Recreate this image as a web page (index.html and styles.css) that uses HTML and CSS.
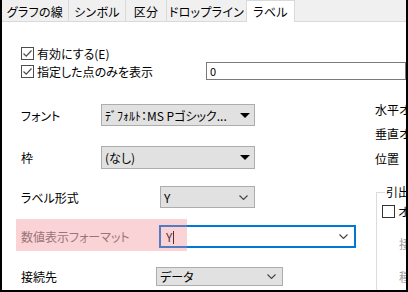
FILE: index.html
```html
<!DOCTYPE html>
<html lang="ja">
<head>
    <meta charset="UTF-8">
    <title>ラベル</title>
    <link rel="stylesheet" href="styles.css">
</head>
<body>

<div class="window">
    <!-- Tab strip -->
    <div class="tabs">
        <div class="tab tab-line">グラフの線</div>
        <div class="tab tab-symbol">シンボル</div>
        <div class="tab tab-split">区分</div>
        <div class="tab tab-drop">ドロップライン</div>
        <div class="tab tab-label active">ラベル</div>
    </div>

    <div class="page">
        <!-- Check options -->
        <div class="checks">
            <div class="check-row">
                <label class="check">
                    <svg class="checkbox" width="13" height="13" viewBox="0 0 13 13"><rect x="0.5" y="0.5" width="12" height="12" fill="#fff" stroke="#4d4d4d"/><polyline points="2.5,6.5 5.2,9.2 10.5,3.5" fill="none" stroke="#4d4d4d" stroke-width="1.2"/></svg>
                    有効にする(E)
                </label>
            </div>
            <div class="check-row">
                <label class="check check-wide">
                    <svg class="checkbox" width="13" height="13" viewBox="0 0 13 13"><rect x="0.5" y="0.5" width="12" height="12" fill="#fff" stroke="#4d4d4d"/><polyline points="2.5,6.5 5.2,9.2 10.5,3.5" fill="none" stroke="#4d4d4d" stroke-width="1.2"/></svg>
                    指定した点のみを表示
                </label>
                <div class="text-input">0</div>
            </div>
        </div>

        <div class="form">
            <!-- Left column -->
            <div class="left">
                <div class="row row-font">
                    <span class="label w-80">フォント</span>
                    <div class="combo old w-154">
                        <span>ﾃﾞﾌｫﾙﾄ：MS Pゴシック...</span>
                        <span class="tri"></span>
                    </div>
                </div>
                <div class="row row-frame">
                    <span class="label w-80">枠</span>
                    <div class="combo old w-154">
                        <span>(なし)</span>
                        <span class="tri"></span>
                    </div>
                </div>
                <div class="row row-type">
                    <span class="label w-139">ラベル形式</span>
                    <div class="combo w-95">
                        <span>Y</span>
                        <svg class="chev" width="9" height="5" viewBox="0 0 9 5"><polyline points="0.5,0.5 4.5,4.5 8.5,0.5" fill="none" stroke="#444" stroke-width="1.1"/></svg>
                    </div>
                </div>
                <div class="row row-format">
                    <span class="label muted w-138">数値表示フォーマット</span>
                    <div class="combo focus w-197">
                        <span>Y<span class="caret"></span></span>
                        <svg class="chev" width="9" height="5" viewBox="0 0 9 5"><polyline points="0.5,0.5 4.5,4.5 8.5,0.5" fill="none" stroke="#444" stroke-width="1.1"/></svg>
                    </div>
                    <div class="highlight"></div>
                </div>
                <div class="row row-target">
                    <span class="label w-135">接続先</span>
                    <div class="combo w-127">
                        <span>データ</span>
                        <svg class="chev" width="9" height="5" viewBox="0 0 9 5"><polyline points="0.5,0.5 4.5,4.5 8.5,0.5" fill="none" stroke="#444" stroke-width="1.1"/></svg>
                    </div>
                </div>
            </div>

            <!-- Right column (cut off by the window edge) -->
            <div class="right">
                <div class="r-label r-horiz">水平オフセット</div>
                <div class="r-label r-vert">垂直オフセット</div>
                <div class="r-label r-pos">位置</div>
                <fieldset class="group">
                    <legend>引出線</legend>
                    <label class="check">
                        <svg class="checkbox" width="13" height="13" viewBox="0 0 13 13"><rect x="0.5" y="0.5" width="12" height="12" fill="#fff" stroke="#333"/></svg>
                        オン
                    </label>
                    <div class="r-label gray r-conn">接続</div>
                    <div class="r-label gray r-kind">種類</div>
                </fieldset>
            </div>
        </div>
    </div>
</div>

</body>
</html>
```

FILE: styles.css
```css
body {
    margin: 0;
    font-family: "Noto Sans CJK JP", "Noto Sans", sans-serif;
    font-size: 12px;
    font-feature-settings: "palt";
    color: #000;
    background: #fff;
}
.window {
    width: 408px;
    height: 292px;
    box-sizing: border-box;
    border-left: 2px solid #000;
    border-right: 2px solid #000;
    border-bottom: 2px solid #000;
    overflow: hidden;
    background: #fff;
}
.tabs {
    display: flex;
    height: 21px;
    background: #f0f0f0;
    border-bottom: 1px solid #d9d9d9;
    white-space: nowrap;
}
.tab {
    height: 21px;
    line-height: 23px;
    text-align: center;
    letter-spacing: 0.3px;
    box-sizing: border-box;
    border-right: 1px solid #d9d9d9;
}
.tab-line { width: 67px; }
.tab-symbol { width: 57px; }
.tab-split { width: 41px; }
.tab-drop { width: 80px; }
.tab-label { width: 49px; }
.tab.active {
    background: #fff;
    height: 22px;
    line-height: 22px;
    border-top: 1px solid #d9d9d9;
    border-left: 1px solid #d9d9d9;
    border-right: 1px solid #d9d9d9;
    margin-left: -1px;
}
.page {
    padding-left: 19px;
}
.checks {
    padding-top: 22px;
}
.check-row {
    display: flex;
    align-items: center;
    height: 18px;
}
.check {
    display: flex;
    align-items: center;
    gap: 3px;
    white-space: nowrap;
}
.check-wide {
    width: 213px;
}
.checkbox {
    flex: none;
}
.text-input {
    width: 200px;
    height: 18px;
    box-sizing: border-box;
    border: 1px solid #7a7a7a;
    padding-left: 3px;
    line-height: 16px;
    font-size: 11px;
    flex: none;
}
.form {
    display: flex;
}
.left {
    width: 354px;
    flex: none;
    padding-top: 24px;
}
.row {
    display: flex;
    align-items: center;
    position: relative;
    white-space: nowrap;
}
.label {
    flex: none;
}
.label.muted {
    color: #6d6d6d;
}
.w-80 { width: 80px; }
.w-139 { width: 139px; }
.w-138 { width: 138px; }
.w-135 { width: 135px; }
.row-font { height: 22px; }
.row-frame { height: 23px; margin-top: 20px; }
.row-type { height: 22px; margin-top: 17px; }
.row-format { height: 23px; margin-top: 17px; }
.row-target { height: 19px; margin-top: 19px; }
.combo {
    height: 100%;
    box-sizing: border-box;
    display: flex;
    align-items: center;
    justify-content: space-between;
    background: #e1e1e1;
    border: 1px solid #adadad;
    padding: 0 6px 0 3px;
    flex: none;
}
.combo.old {
    padding-right: 4px;
}
.combo.focus {
    background: #fff;
    border: 2px solid #0078d7;
    padding-left: 5px;
}
.w-154 { width: 154px; }
.w-95 { width: 95px; }
.w-197 { width: 197px; }
.w-127 { width: 127px; }
.tri {
    width: 0;
    height: 0;
    border-left: 5px solid transparent;
    border-right: 5px solid transparent;
    border-top: 5px solid #000;
}
.caret {
    display: inline-block;
    width: 1px;
    height: 13px;
    background: #000;
    vertical-align: -2px;
    margin-left: 1px;
}
.highlight {
    position: absolute;
    left: -5px;
    top: -6px;
    width: 171px;
    height: 32px;
    background: rgba(240, 128, 140, 0.35);
}
.right {
    flex: none;
    width: 40px;
    padding-top: 22px;
    white-space: nowrap;
}
.r-label {
    height: 16px;
    line-height: 16px;
}
.r-vert { margin-top: 8px; }
.r-pos { margin-top: 9px; }
.gray {
    color: #a0a0a0;
}
.group {
    margin: 17px 0 0 1px;
    padding: 0 0 0 5px;
    border: 1px solid #dcdcdc;
    border-right: none;
    height: 120px;
}
.group legend {
    padding: 0 1px;
    margin-left: 3px;
    line-height: 16px;
}
.group .check {
    margin-top: 3px;
}
.r-conn {
    margin-top: 16px;
    padding-left: 17px;
}
.r-kind {
    margin-top: 17px;
    padding-left: 17px;
}
```
